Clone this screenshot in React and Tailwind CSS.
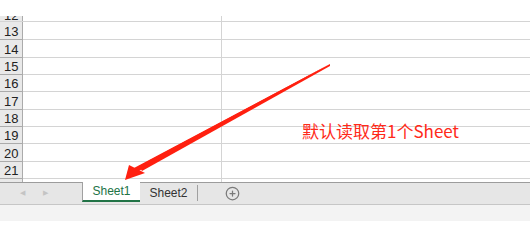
import { FiPlusCircle } from "react-icons/fi";

const rows = [
	{ n: 13, h: "h-[18px]" },
	{ n: 14, h: "h-[18px]" },
	{ n: 15, h: "h-[17px]" },
	{ n: 16, h: "h-[17px]" },
	{ n: 17, h: "h-[18px]" },
	{ n: 18, h: "h-[17px]" },
	{ n: 19, h: "h-[17px]" },
	{ n: 20, h: "h-[18px]" },
	{ n: 21, h: "h-[17px]" }
];

function Row({ n, h }) {
	return (
		<div className={`flex ${h} border-b border-[#d4d4d4]`}>
			<div className="w-[23px] shrink-0 bg-[#e9e9e9] border-r border-[#ababab] border-b border-b-[#ababab] -mb-px flex items-end pl-[4px] pb-[1px] text-[13px] leading-none text-[#222]">
				{n}
			</div>
			<div className="w-[199px] border-r border-[#d4d4d4]" />
			<div className="flex-1" />
		</div>
	);
}

export default function App() {
	return (
		<div
			className="relative w-[530px] h-[240px] bg-white overflow-hidden"
			style={{ fontFamily: "'Liberation Sans', Arial, sans-serif" }}
		>
			{/* grid */}
			<div className="h-[16px]" />
			<div className="flex h-[6px] border-b border-[#d4d4d4] overflow-hidden">
				<div className="w-[23px] shrink-0 bg-[#e9e9e9] border-r border-[#ababab] flex items-end pl-[4px] text-[13px] leading-none text-[#222]">
					<span className="-mb-[1px]">12</span>
				</div>
				<div className="w-[199px] border-r border-[#d4d4d4]" />
			</div>
			{rows.map((r) => (
				<Row key={r.n} {...r} />
			))}
			<div className="flex h-[3px]">
				<div className="w-[23px] shrink-0 bg-[#e9e9e9] border-r border-[#ababab]" />
				<div className="w-[199px] border-r border-[#d4d4d4]" />
			</div>

			{/* sheet tabs */}
			<div className="h-[23px] bg-[#e6e6e6] border-t border-[#9c9c9c] border-b border-b-[#c6c6c6] flex items-start text-[12px]">
				<div className="w-[82px] flex items-center h-full pl-[20px] gap-[18px] text-[#c4c4c4] text-[7px]">
					<span>◀</span>
					<span>▶</span>
				</div>
				<div className="w-[58px] h-[20px] -mt-px bg-white border-l border-[#a0a0a0] border-b-2 border-b-[#217346] flex items-center justify-center text-[#217346]">
					Sheet1
				</div>
				<div className="w-[57px] h-[20px] flex items-center justify-center text-[#333]">
					Sheet2
				</div>
				<div className="w-px h-[16px] mt-[2px] bg-[#a0a0a0]" />
				<div className="w-[68px] h-[20px] flex items-center justify-center text-[#7a7a7a]">
					<FiPlusCircle size={15} strokeWidth={2} />
				</div>
			</div>
			<div className="h-[16px] bg-[#f3f3f3]" />

			{/* annotation */}
			<svg className="absolute left-0 top-0" width="530" height="240" viewBox="0 0 530 240">
				<path d="M330 64 L139 166 L142 171 L330 66 Z" fill="#ff2010" />
				<path d="M125 180 L129 165 L145 173 Z" fill="#ff2010" />
				<path d="M330 64 L134 168 L137 172 Z" fill="#ff2010" />
			</svg>
			<div
				className="absolute left-[302px] top-[121px] text-[17px] leading-[20px] text-[#ff2a1a] whitespace-nowrap"
				style={{ fontFamily: "'Noto Sans CJK SC', 'Liberation Sans', sans-serif" }}
			>
				默认读取第1个Sheet
			</div>
		</div>
	);
}
